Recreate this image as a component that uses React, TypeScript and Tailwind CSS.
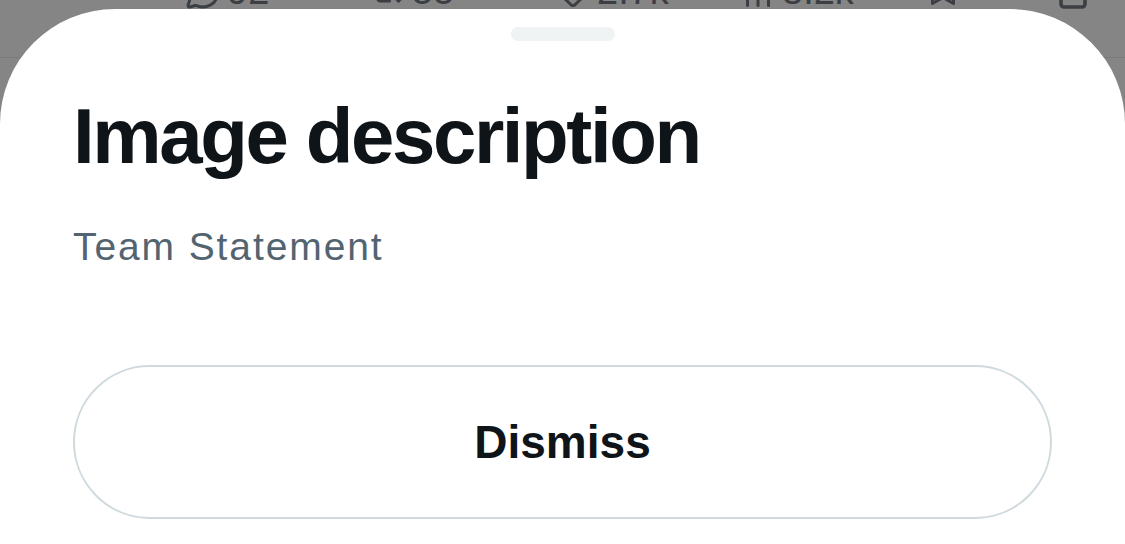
import React from "react";
import { MessageCircle, Repeat2, Heart, ChartNoAxesColumn, Bookmark, Share } from "lucide-react";

const actions = [
  { icon: MessageCircle, count: "92" },
  { icon: Repeat2, count: "55" },
  { icon: Heart, count: "2.7k" },
  { icon: ChartNoAxesColumn, count: "8.2k" },
  { icon: Bookmark, count: "" },
];

const App: React.FC = () => {
  return (
    <div
      className="relative h-[544px] w-[1125px] overflow-hidden bg-[#858585]"
      style={{ fontFamily: '"Liberation Sans", Arial, sans-serif' }}
    >
      {/* Dimmed tweet action bar behind the sheet */}
      <div className="-mt-[28px] flex h-[86px] items-start border-b border-[#7b7b7b] pl-[185px] pt-0 text-[#3b3f43]">
        {actions.map(({ icon: Icon, count }, i) => (
          <div key={i} className="flex w-[185px] items-end gap-[6px]">
            <Icon className="h-[36px] w-[36px]" strokeWidth={2} />
            {count && <span className="text-[38px] leading-none">{count}</span>}
          </div>
        ))}
        <div className="-ml-[55px] pt-[2px]">
          <Share className="h-[36px] w-[36px]" strokeWidth={2.4} />
        </div>
      </div>

      {/* Bottom sheet */}
      <div className="absolute inset-x-0 top-[9px] bottom-0 flex flex-col rounded-t-[115px] bg-white px-[73px]">
        <div className="mx-auto mt-[18px] h-[14px] w-[104px] rounded-full bg-[#eff3f4]" />

        <h1 className="mt-[56px] text-[78px] font-bold leading-none tracking-[-2.4px] text-[#0f1419]">
          Image description
        </h1>

        <p className="mt-[52px] text-[39px] leading-none tracking-[1.9px] text-[#536471]">
          Team Statement
        </p>

        <button className="mt-[99px] flex h-[154px] w-full items-center justify-center rounded-full border-2 border-[#cfd9de] bg-white text-[46px] font-bold leading-none text-[#0f1419]">
          Dismiss
        </button>
      </div>
    </div>
  );
};

export default App;
